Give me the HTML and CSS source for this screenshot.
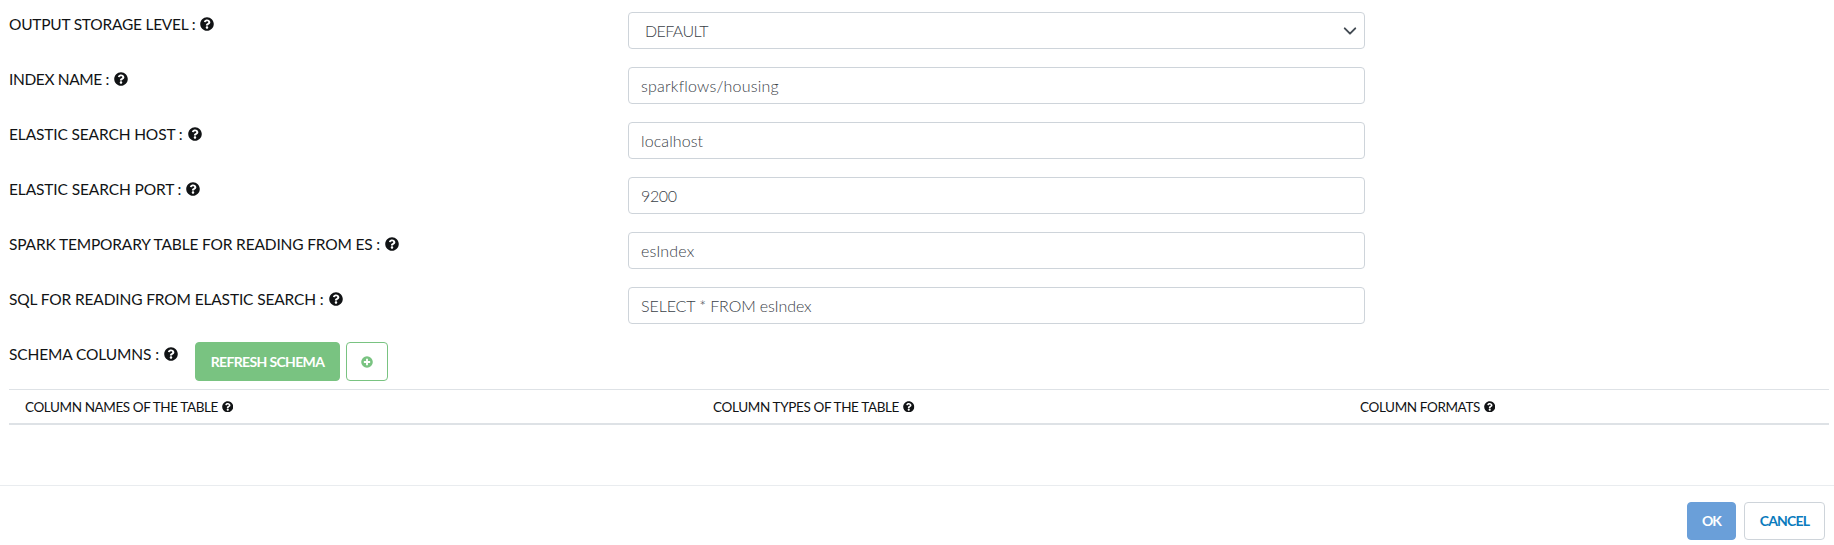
FILE: index.html
```html
<!DOCTYPE html>
<html lang="en">
<head>
<meta charset="utf-8">
<title>Node properties</title>
<link rel="stylesheet" href="styles.css">
</head>
<body>
<svg class="sprite" aria-hidden="true">
  <symbol id="help" viewBox="0 0 512 512"><path fill="currentColor" d="M504 256c0 137-111 248-248 248S8 393 8 256 119 8 256 8s248 111 248 248zM262.700 90c-54.500 0-89.300 23-116.500 63.800-3.500 5.300-2.400 12.400 2.700 16.300l34.700 26.300c5.200 3.900 12.600 3 16.700-2.100 17.900-22.700 30.100-35.800 57.300-35.800 20.400 0 45.700 13.100 45.700 33 0 15-12.400 22.700-32.500 34C247.100 238.500 216 254.900 216 296v4c0 6.600 5.400 12 12 12h56c6.600 0 12-5.400 12-12v-1.300c0-28.500 83.200-29.600 83.200-106.700 0-58-60.200-102-116.500-102zM256 338c-25.400 0-46 20.600-46 46s20.600 46 46 46 46-20.600 46-46-20.600-46-46-46z"/></symbol>
  <symbol id="plus" viewBox="0 0 512 512"><path fill="currentColor" fill-rule="evenodd" d="M256 8a248 248 0 1 0 0 496a248 248 0 1 0 0-496zM216 122h80v94h94v80h-94v94h-80v-94h-94v-80h94z"/></symbol>
</svg>
<main class="form">
  <div class="row"><label class="label"><span class="t l1">OUTPUT STORAGE LEVEL :</span><svg class="help"><use href="#help"/></svg></label>
    <div class="control select"><span class="t v1">DEFAULT</span><svg class="chevron" viewBox="0 0 16 16"><path d="M2 5l6 6 6-6"/></svg></div></div>
  <div class="row"><label class="label"><span class="t l2">INDEX NAME :</span><svg class="help"><use href="#help"/></svg></label>
    <div class="control"><span class="t v2">sparkflows/housing</span></div></div>
  <div class="row"><label class="label"><span class="t l3">ELASTIC SEARCH HOST :</span><svg class="help"><use href="#help"/></svg></label>
    <div class="control"><span class="t v3">localhost</span></div></div>
  <div class="row"><label class="label"><span class="t l4">ELASTIC SEARCH PORT :</span><svg class="help"><use href="#help"/></svg></label>
    <div class="control"><span class="t v4">9200</span></div></div>
  <div class="row"><label class="label"><span class="t l5">SPARK TEMPORARY TABLE FOR READING FROM ES :</span><svg class="help"><use href="#help"/></svg></label>
    <div class="control"><span class="t v5">esIndex</span></div></div>
  <div class="row"><label class="label"><span class="t l6">SQL FOR READING FROM ELASTIC SEARCH :</span><svg class="help"><use href="#help"/></svg></label>
    <div class="control"><span class="t v6">SELECT * FROM esIndex</span></div></div>
  <div class="schema"><label class="label"><span class="t l7">SCHEMA COLUMNS :</span><svg class="help"><use href="#help"/></svg></label>
    <button class="btn refresh"><span class="t b1">REFRESH SCHEMA</span></button>
    <button class="btn add" aria-label="Add column"><svg class="plus"><use href="#plus"/></svg></button></div>
  <div class="thead">
    <div class="th"><span class="t h1">COLUMN NAMES OF THE TABLE</span><svg class="help"><use href="#help"/></svg></div>
    <div class="th"><span class="t h2">COLUMN TYPES OF THE TABLE</span><svg class="help"><use href="#help"/></svg></div>
    <div class="th"><span class="t h3">COLUMN FORMATS</span><svg class="help"><use href="#help"/></svg></div>
  </div>
</main>
<footer class="footer">
  <button class="btn ok"><span class="t b2">OK</span></button>
  <button class="btn cancel"><span class="t b3">CANCEL</span></button>
</footer>
</body>
</html>
```
FILE: styles.css
```css
* { box-sizing: border-box; }
body { margin: 0; height: 545px; overflow: hidden; background: #fff; color: #111315; font-family: Lato, "Open Sans", sans-serif; }
.sprite { display: none; }
.t { white-space: nowrap; }
.form { height: 485px; padding: 12px 5px 0 9px; }
.row { display: grid; grid-template-columns: 619px 737px; height: 55px; align-items: start; }
.label { display: flex; align-items: center; height: 24px; font-size: 15.5px; line-height: 24px; }
.label .help { width: 14px; height: 14px; margin-left: 5px; flex: none; }
.control { display: flex; align-items: center; height: 37px; padding: 0 12px; border: 1px solid #ced4da; border-radius: 4px; color: #3a4148; font-size: 16px; font-weight: 300; }
.select { justify-content: space-between; padding-left: 16px; padding-right: 7px; }
.chevron { width: 14px; height: 14px; fill: none; stroke: #434b53; stroke-width: 2.2; stroke-linecap: round; stroke-linejoin: round; }
.schema { display: flex; height: 47px; align-items: flex-start; }
.btn { display: flex; align-items: center; justify-content: center; height: 39px; padding: 0; border: 1px solid; border-radius: 4px; background: #fff; font-family: inherit; font-size: 14px; font-weight: 700; }
.refresh { width: 145px; margin-left: 17px; background: #79c381; border-color: #79c381; color: #fff; }
.add { width: 42px; margin-left: 6px; color: #79c381; }
.plus { width: 12px; height: 12px; }
.thead { display: grid; grid-template-columns: 688px 647px 1fr; height: 36px; padding-left: 16px; border-top: 1px solid #dee2e6; border-bottom: 2px solid #dee2e6; font-size: 13.5px; }
.th { display: flex; align-items: center; }
.th .help { width: 11.5px; height: 11.5px; margin-left: 4px; }
.footer { display: flex; justify-content: flex-end; gap: 8px; height: 60px; padding: 16px 9px 0; border-top: 1px solid #e9ecef; }
.footer .btn { height: 38px; padding-bottom: 2px; }
.ok { width: 49px; background: #6a9fd9; border-color: #6a9fd9; color: #fff; }
.cancel { width: 81px; border-color: #ced4da; color: #0a7bbd; }

/* Tracking */
.l1 { letter-spacing: -.236px; }
.l2 { letter-spacing: -.375px; }
.l3 { letter-spacing: -.138px; }
.l4 { letter-spacing: -.12px; }
.l5 { letter-spacing: -.165px; }
.l6 { letter-spacing: -.14px; }
.l7 { letter-spacing: -.12px; }
.v1 { letter-spacing: -.6px; }
.v2 { letter-spacing: .2px; }
.v3 { letter-spacing: .1px; }
.v4 { letter-spacing: -.4px; }
.v5 { letter-spacing: .15px; }
.v6 { letter-spacing: -.1px; }
.h1 { letter-spacing: -.4px; }
.h2 { letter-spacing: -.36px; }
.h3 { letter-spacing: -.38px; }
.b1 { letter-spacing: -.65px; }
.b2 { letter-spacing: -.9px; }
.b3 { letter-spacing: -.8px; }
```
